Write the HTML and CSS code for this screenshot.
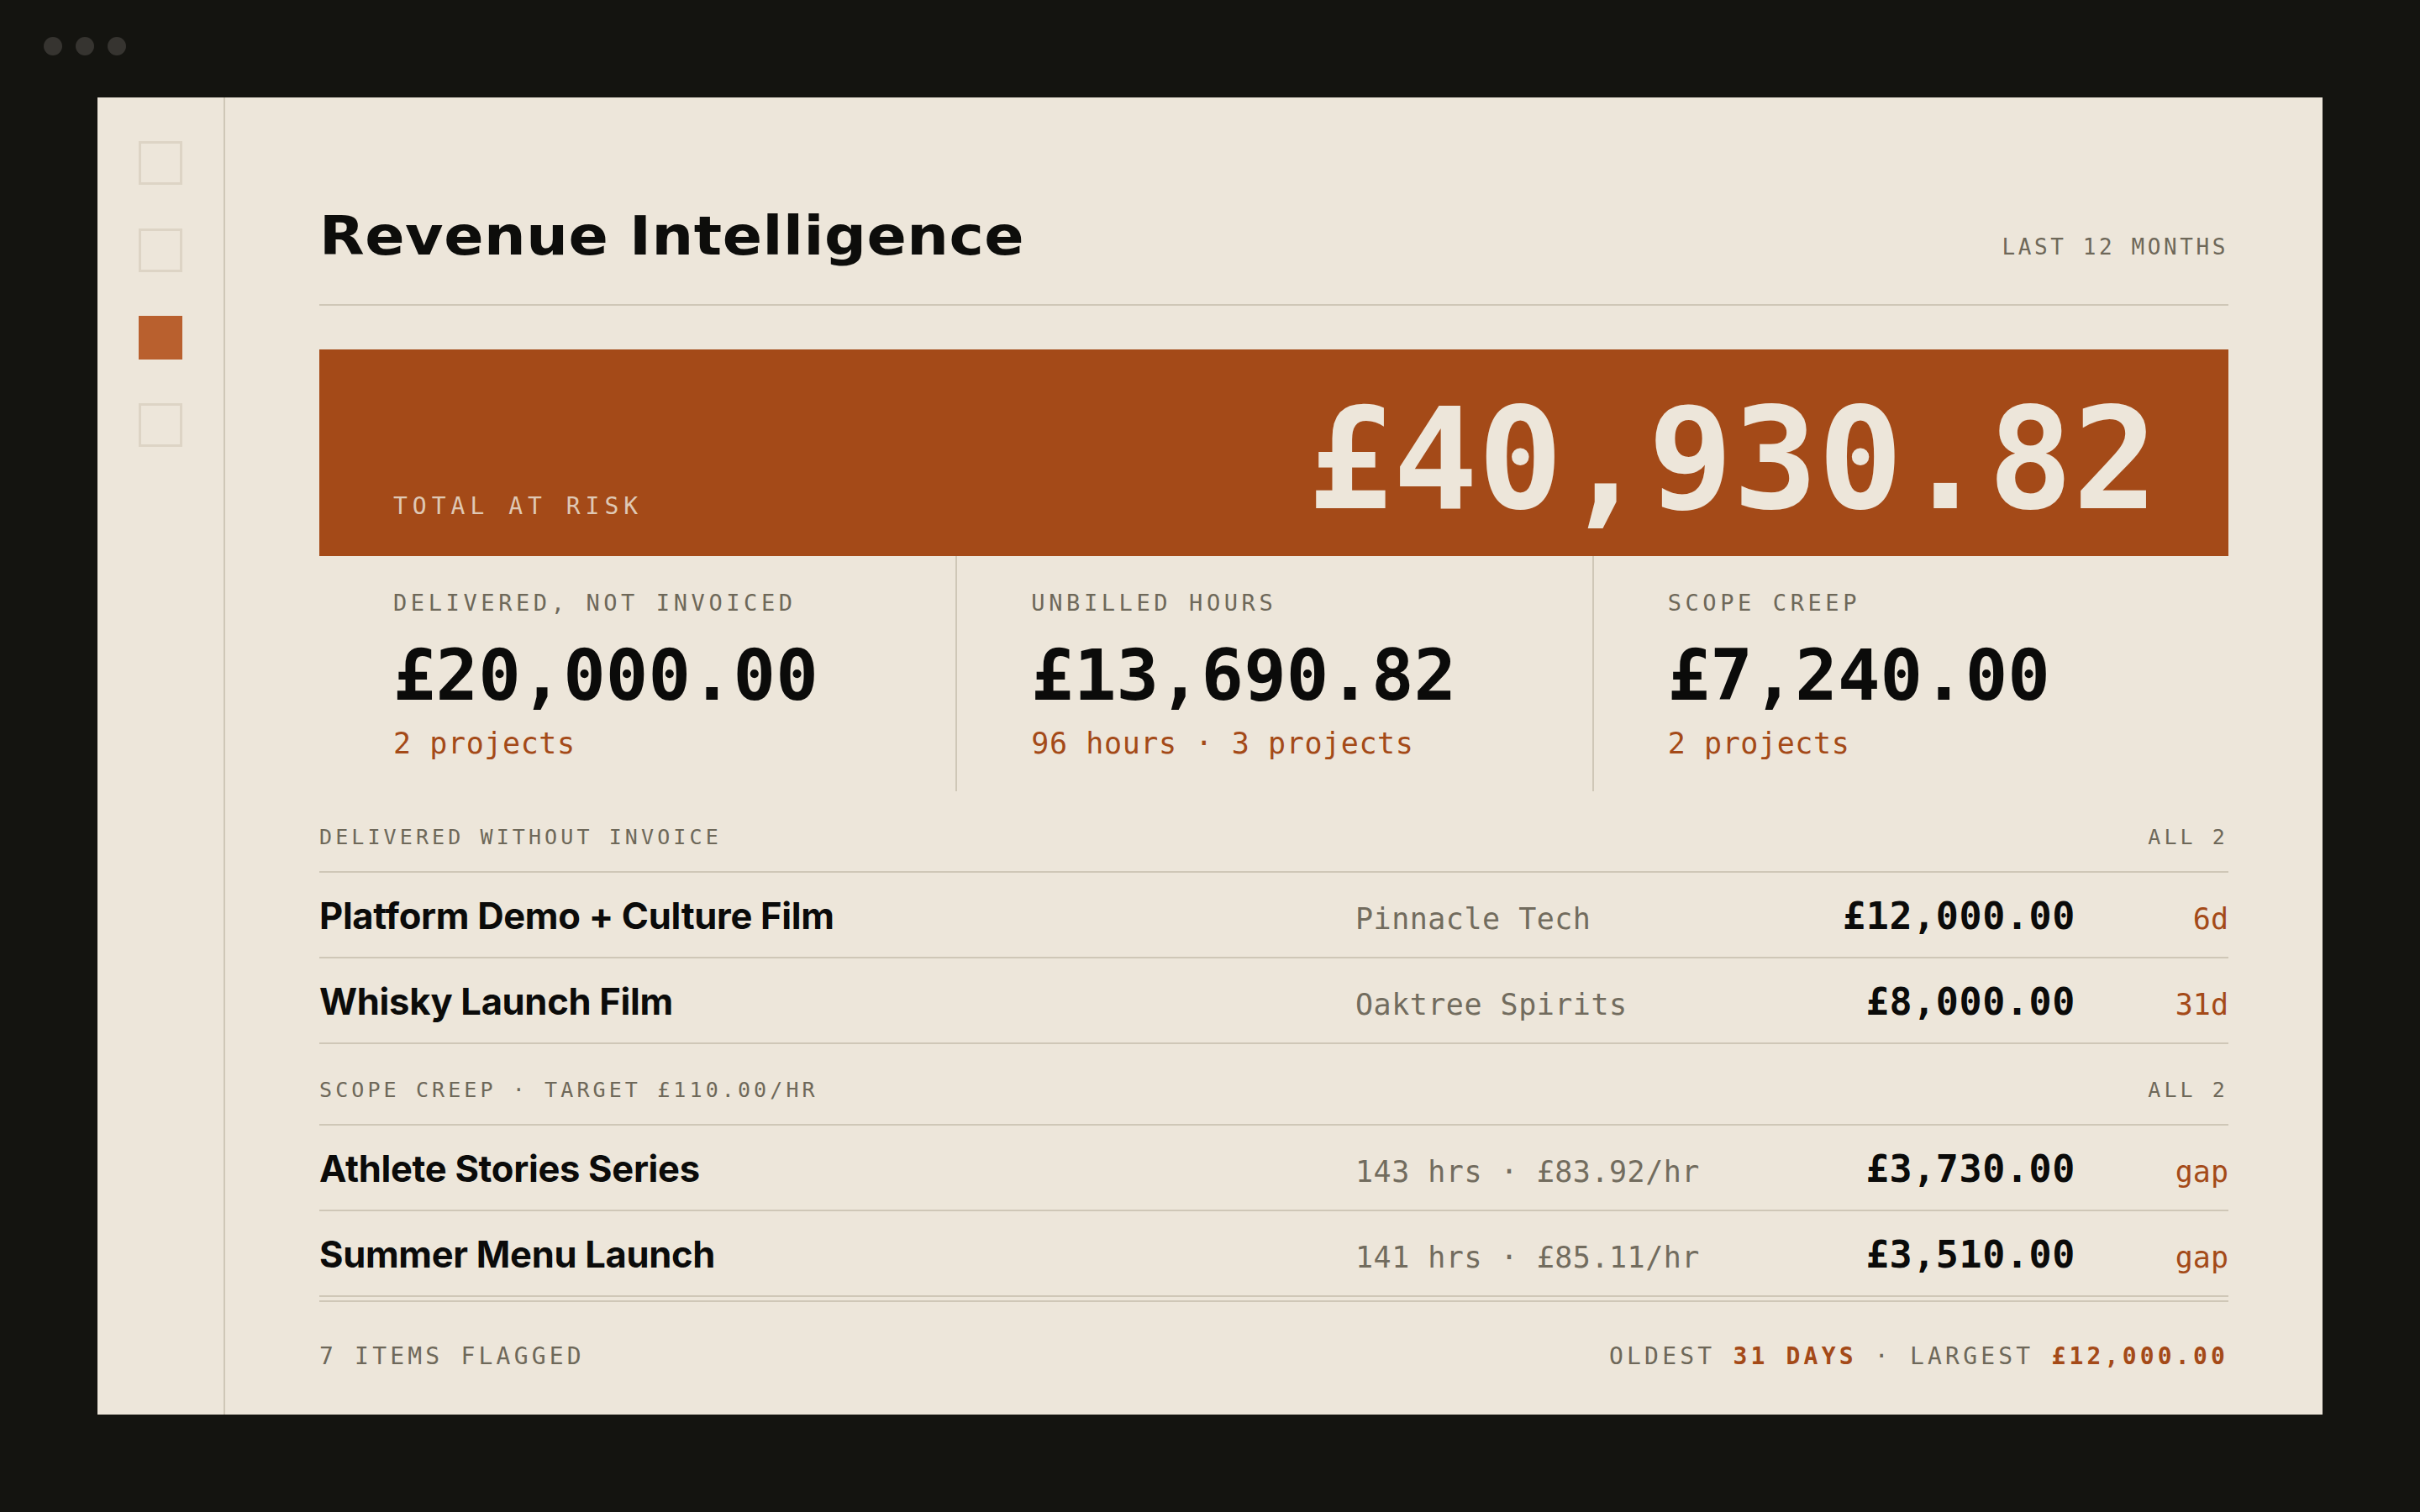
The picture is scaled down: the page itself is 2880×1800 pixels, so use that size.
FILE: index.html
```html
<!DOCTYPE html>
<html lang="en">
<head>
    <meta charset="UTF-8">
    <meta name="viewport" content="width=device-width, initial-scale=1.0">
    <title>Revenue Intelligence</title>
    <link rel="stylesheet" href="styles.css">
</head>
<body>
    <div class="window-bar">
        <span class="dot"></span>
        <span class="dot"></span>
        <span class="dot"></span>
    </div>

    <div class="panel">
        <nav class="sidebar">
            <a class="nav-item" href="#"></a>
            <a class="nav-item" href="#"></a>
            <a class="nav-item active" href="#"></a>
            <a class="nav-item" href="#"></a>
        </nav>

        <main class="content">
            <header class="page-header">
                <h1>Revenue Intelligence</h1>
                <span class="period">Last 12 months</span>
            </header>

            <!-- Headline total -->
            <section class="hero">
                <span class="hero-label">Total at risk</span>
                <span class="hero-value">£40,930.82</span>
            </section>

            <section class="stats">
                <div class="stat">
                    <div class="stat-label">Delivered, not invoiced</div>
                    <div class="stat-value">£20,000.00</div>
                    <div class="stat-note">2 projects</div>
                </div>
                <div class="stat">
                    <div class="stat-label">Unbilled hours</div>
                    <div class="stat-value">£13,690.82</div>
                    <div class="stat-note">96 hours · 3 projects</div>
                </div>
                <div class="stat">
                    <div class="stat-label">Scope creep</div>
                    <div class="stat-value">£7,240.00</div>
                    <div class="stat-note">2 projects</div>
                </div>
            </section>

            <!-- Delivered work with no invoice -->
            <div class="section-head">
                <span>Delivered without invoice</span>
                <span>All 2</span>
            </div>
            <div class="row">
                <span class="row-title">Platform Demo + Culture Film</span>
                <span class="row-meta">Pinnacle Tech</span>
                <span class="row-amount">£12,000.00</span>
                <span class="row-tag">6d</span>
            </div>
            <div class="row">
                <span class="row-title">Whisky Launch Film</span>
                <span class="row-meta">Oaktree Spirits</span>
                <span class="row-amount">£8,000.00</span>
                <span class="row-tag">31d</span>
            </div>

            <!-- Projects running under target rate -->
            <div class="section-head">
                <span>Scope creep · target £110.00/hr</span>
                <span>All 2</span>
            </div>
            <div class="row">
                <span class="row-title">Athlete Stories Series</span>
                <span class="row-meta">143 hrs · £83.92/hr</span>
                <span class="row-amount">£3,730.00</span>
                <span class="row-tag">gap</span>
            </div>
            <div class="row">
                <span class="row-title">Summer Menu Launch</span>
                <span class="row-meta">141 hrs · £85.11/hr</span>
                <span class="row-amount">£3,510.00</span>
                <span class="row-tag">gap</span>
            </div>

            <footer class="summary">
                <span>7 items flagged</span>
                <span>Oldest <b>31 days</b> · Largest <b>£12,000.00</b></span>
            </footer>
        </main>
    </div>
</body>
</html>
```

FILE: styles.css
```css
body {
    margin: 0;
    background-color: #141410;
    font-family: "DejaVu Sans Mono", monospace;
    color: #111;
}

.window-bar {
    height: 116px;
    box-sizing: border-box;
    padding: 44px 0 0 52px;
    display: flex;
    gap: 16px;
}
.dot {
    width: 22px;
    height: 22px;
    border-radius: 50%;
    background-color: #363430;
}

.panel {
    margin: 0 116px;
    height: 1568px;
    display: flex;
    background-color: #ede6da;
}

.sidebar {
    width: 150px;
    flex-shrink: 0;
    border-right: 2px solid #cfc7b7;
    display: flex;
    flex-direction: column;
    align-items: center;
    gap: 52px;
    padding-top: 52px;
}
.nav-item {
    display: block;
    width: 52px;
    height: 52px;
    box-sizing: border-box;
    border: 3px solid #ddd4c5;
}
.nav-item.active {
    background-color: #b9602e;
    border-color: #b9602e;
}

.content {
    flex: 1;
    padding: 133px 112px 0;
}

.page-header {
    display: flex;
    justify-content: space-between;
    align-items: baseline;
    padding-bottom: 49px;
    border-bottom: 2px solid #cfc7b7;
}
/* widened display heading */
.page-header h1 {
    margin: 0;
    font-family: "DejaVu Sans", sans-serif;
    font-weight: bold;
    font-size: 64px;
    line-height: 1;
    letter-spacing: 0.5px;
    color: #0d0d0b;
    transform: scaleX(1.09);
    transform-origin: left center;
}
.period {
    font-size: 26px;
    letter-spacing: 3.6px;
    text-transform: uppercase;
    color: #6e6859;
}

.hero {
    margin-top: 52px;
    height: 246px;
    box-sizing: border-box;
    padding: 0 84px 0 88px;
    display: flex;
    justify-content: space-between;
    align-items: flex-end;
    background-color: #a44a18;
}
.hero-label {
    margin-bottom: 45px;
    font-size: 28px;
    line-height: 1;
    letter-spacing: 6px;
    text-transform: uppercase;
    color: rgba(237, 230, 218, 0.82);
}
.hero-value {
    margin-bottom: 31px;
    font-size: 168px;
    font-weight: bold;
    line-height: 1;
    color: #ede6da;
}

.stats {
    display: grid;
    grid-template-columns: repeat(3, 1fr);
}
.stat {
    padding: 40px 0 35px 88px;
}
.stat + .stat {
    border-left: 2px solid #cfc7b7;
}
.stat-label {
    font-size: 27px;
    line-height: 32px;
    letter-spacing: 4.6px;
    text-transform: uppercase;
    color: #6e6859;
}
.stat-value {
    margin-top: 28px;
    font-size: 84px;
    font-weight: bold;
    line-height: 84px;
    color: #0b0b0a;
}
.stat-note {
    margin-top: 17px;
    font-size: 35px;
    line-height: 44px;
    letter-spacing: 0.6px;
    color: #a44a18;
}

.section-head {
    display: flex;
    justify-content: space-between;
    padding: 40px 0 25px;
    border-bottom: 2px solid #cfc7b7;
    font-size: 25px;
    line-height: 30px;
    letter-spacing: 4.1px;
    text-transform: uppercase;
    color: #6e6859;
}

.row {
    display: grid;
    grid-template-columns: 1fr 557px 300px 182px;
    align-items: baseline;
    height: 102px;
    box-sizing: border-box;
    padding-top: 25px;
    border-bottom: 2px solid #cfc7b7;
}
.row-title {
    font-family: Inter, sans-serif;
    font-weight: 700;
    font-size: 43.5px;
    letter-spacing: -0.3px;
    color: #0b0b0a;
}
.row-meta {
    font-size: 35px;
    letter-spacing: 0.5px;
    color: #726c5e;
}
.row-amount {
    font-size: 45px;
    font-weight: bold;
    letter-spacing: 0.6px;
    text-align: right;
    color: #0b0b0a;
}
.row-tag {
    font-size: 35px;
    text-align: right;
    color: #a44a18;
}

.summary {
    margin-top: 4px;
    padding-top: 48px;
    border-top: 2px solid #cfc7b7;
    display: flex;
    justify-content: space-between;
    font-size: 28px;
    line-height: 34px;
    letter-spacing: 4.2px;
    text-transform: uppercase;
    color: #6e6859;
}
.summary b {
    color: #a44a18;
}
```
